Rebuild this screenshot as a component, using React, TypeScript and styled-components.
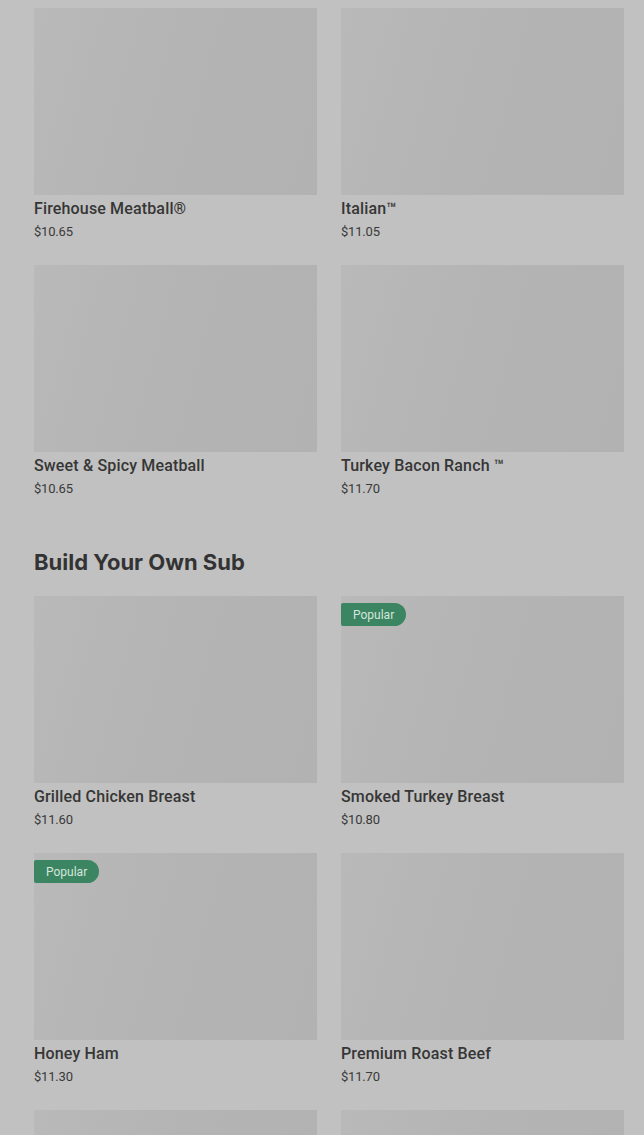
import React from 'react';
import styled, { createGlobalStyle } from 'styled-components';

type Item = { name: string; price: string; popular?: boolean };

const topItems: Item[] = [
  { name: 'Firehouse Meatball®', price: '$10.65' },
  { name: 'Italian™', price: '$11.05' },
  { name: 'Sweet & Spicy Meatball', price: '$10.65' },
  { name: 'Turkey Bacon Ranch ™', price: '$11.70' },
];

const buildItems: Item[] = [
  { name: 'Grilled Chicken Breast', price: '$11.60' },
  { name: 'Smoked Turkey Breast', price: '$10.80', popular: true },
  { name: 'Honey Ham', price: '$11.30', popular: true },
  { name: 'Premium Roast Beef', price: '$11.70' },
  { name: 'Veggie', price: '$9.40' },
  { name: 'Tuna Salad', price: '$10.90' },
];

const GlobalStyle = createGlobalStyle`
  body {
    margin: 0;
    background: #c1c1c1;
    font-family: Roboto, "Liberation Sans", sans-serif;
  }
`;

const ProductCard: React.FC<Item> = ({ name, price, popular }) => (
  <Card>
    <ImageBox>{popular && <Badge>Popular</Badge>}</ImageBox>
    <Title>{name}</Title>
    <Price>{price}</Price>
  </Card>
);

export default function App() {
  return (
    <>
      <GlobalStyle />
      <Page>
        <Grid>
          {topItems.map((item) => (
            <ProductCard key={item.name} {...item} />
          ))}
        </Grid>
        <Heading>Build Your Own Sub</Heading>
        <Grid>
          {buildItems.map((item) => (
            <ProductCard key={item.name} {...item} />
          ))}
        </Grid>
      </Page>
    </>
  );
}

const Page = styled.main`
  height: 1135px;
  overflow: hidden;
  padding: 8px 20px 0 34px;
  box-sizing: border-box;
`;

const Grid = styled.ul`
  display: grid;
  grid-template-columns: 1fr 1fr;
  column-gap: 24px;
  row-gap: 24px;
  margin: 0;
  padding: 0;
`;

const Card = styled.li`
  list-style: none;
  display: flex;
  flex-direction: column;
`;

const ImageBox = styled.div`
  position: relative;
  height: 187px;
  background: linear-gradient(105deg, #b9b9b9 0%, #b4b4b4 45%, #b2b2b2 100%);
`;

const Badge = styled.span`
  position: absolute;
  top: 7px;
  left: 0;
  height: 23px;
  padding: 0 12px;
  display: flex;
  align-items: center;
  background: #3b8562;
  color: #d6e6dc;
  font-size: 12px;
  border-radius: 2px 12px 12px 2px;
`;

const Title = styled.h3`
  margin: 4px 0 0;
  font-size: 16px;
  line-height: 20px;
  font-weight: 500;
  letter-spacing: 0.15px;
  color: #363636;
`;

const Price = styled.span`
  margin-top: 4px;
  font-size: 13px;
  line-height: 18px;
  color: #3a3a3a;
  letter-spacing: -0.2px;
`;

const Heading = styled.h2`
  margin: 49px 0 19px;
  font-family: Inter, "Liberation Sans", sans-serif;
  font-size: 22px;
  line-height: 30px;
  font-weight: 700;
  letter-spacing: 0;
  color: #333333;
`;
